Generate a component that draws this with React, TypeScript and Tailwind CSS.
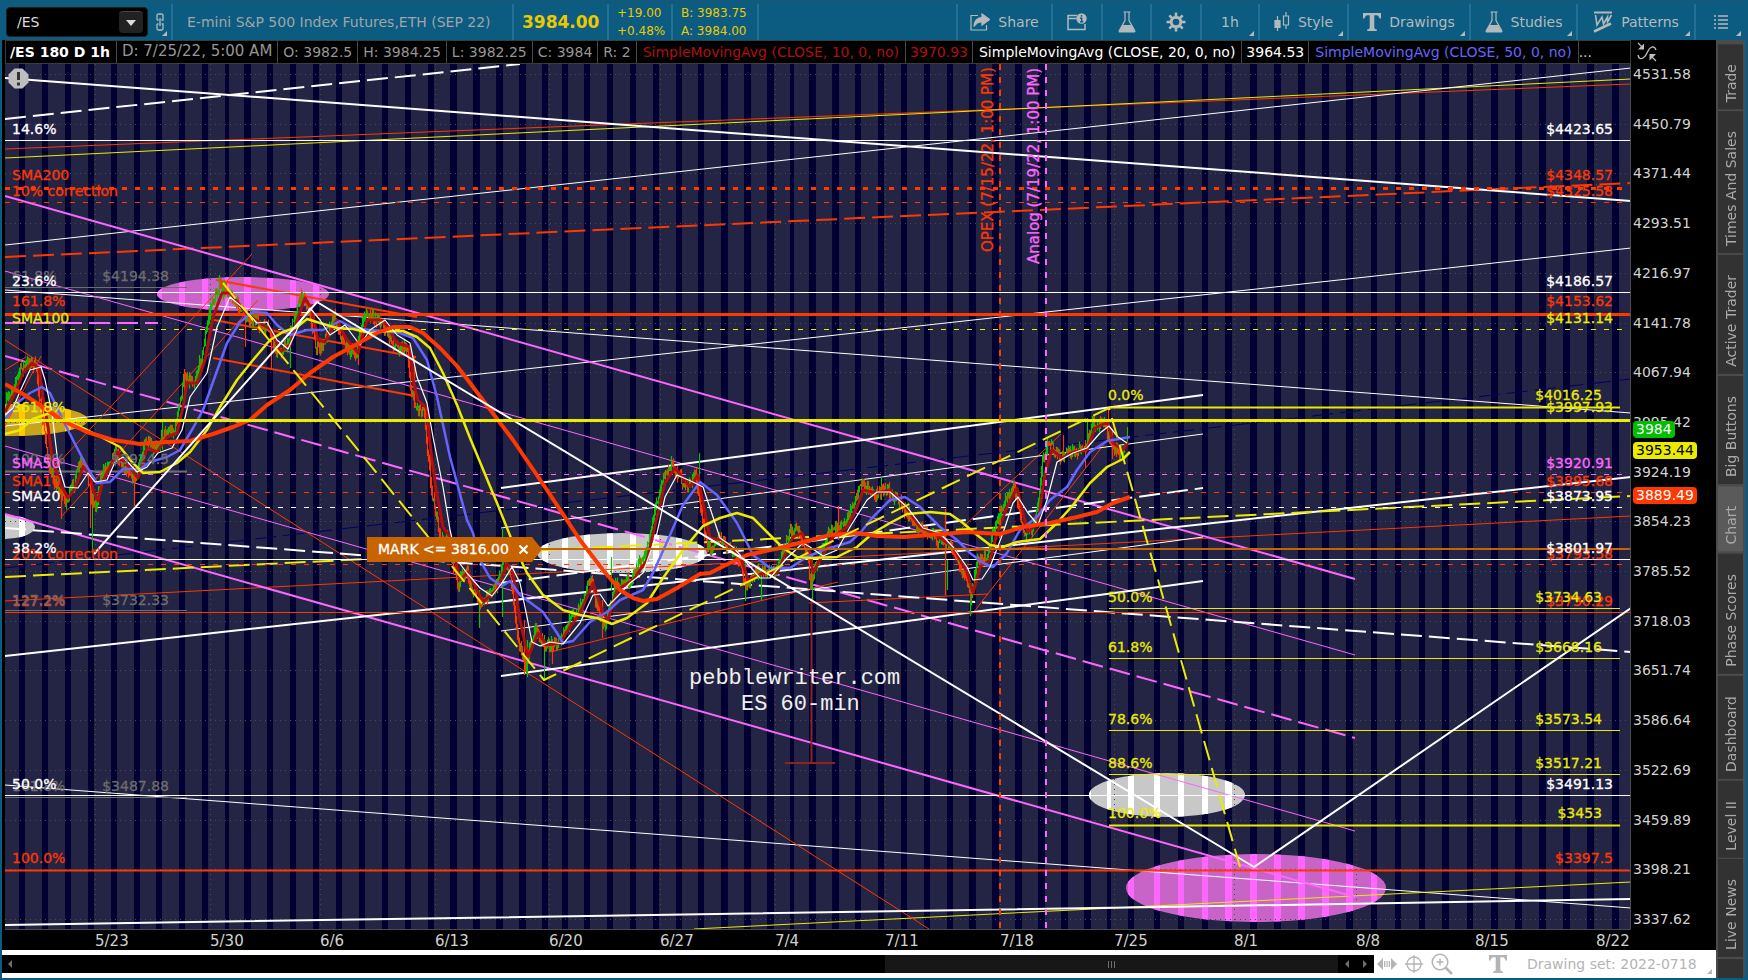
import type { ReactNode } from "react";

type Point = [number, number];

const RED = "#ff3700";
const YELLOW = "#ebeb00";
const PINK = "#ff66ff";
const WHITE = "#ffffff";
const GREY = "#6e6e6e";
const NAVY = "#000064";

const LONG_DASH = "21 7";
const SHORT_DASH = "5 8";

const LEFT = 5;
const RIGHT = 1631;
const TOP = 64;
const BOTTOM = 929;

// session breaks: [x, width]
const sessions: Point[] = [
  [19, 6], [42, 6], [65, 6], [88, 6], [111, 6], [134, 6], [156, 6], [179, 6], [202, 6], [225, 4],
  [244, 7], [267, 6], [290, 6], [313, 6], [336, 6], [359, 6], [382, 6], [405, 6], [428, 6], [450, 7],
  [473, 7], [496, 7], [519, 7], [542, 6], [562, 6], [584, 6], [607, 6], [630, 6], [653, 6], [676, 6],
  [698, 6], [721, 7], [744, 7], [767, 7], [790, 4], [809, 7], [832, 7], [855, 6], [878, 6], [901, 6],
  [924, 6], [947, 6], [969, 7], [992, 7], [1015, 7], [1038, 7], [1061, 7], [1084, 7], [1107, 4], [1128, 6],
  [1154, 6], [1178, 6], [1202, 6], [1225, 7], [1250, 7], [1274, 7], [1298, 7], [1322, 7], [1346, 7], [1371, 6],
  [1395, 6], [1419, 6], [1442, 7], [1467, 6], [1491, 7], [1515, 7], [1539, 7], [1563, 7], [1587, 7], [1612, 7],
];

const prices = [
  "4531.58", "4450.79", "4371.44", "4293.51", "4216.97", "4141.78", "4067.94", "3995.42", "3924.19",
  "3854.23", "3785.52", "3718.03", "3651.74", "3586.64", "3522.69", "3459.89", "3398.21", "3337.62",
];

const dates: [number, string][] = [
  [95, "5/23"], [210, "5/30"], [320, "6/6"], [435, "6/13"], [549, "6/20"], [660, "6/27"], [775, "7/4"],
  [885, "7/11"], [1000, "7/18"], [1114, "7/25"], [1234, "8/1"], [1356, "8/8"], [1475, "8/15"], [1596, "8/22"],
];

const ellipses = [
  { cx: 243, cy: 294, rx: 86, ry: 17, base: "#c864c8", lit: "#ff66ff" },
  { cx: 13, cy: 420, rx: 75, ry: 16, base: "#c8a41e", lit: "#ffc800" },
  { cx: 3, cy: 527, rx: 32, ry: 12, base: "#c8c8c8", lit: "#ffffff" },
  { cx: 622, cy: 553, rx: 85, ry: 20, base: "#c8c8c8", lit: "#ffffff" },
  { cx: 1167, cy: 795, rx: 78, ry: 22, base: "#c8c8c8", lit: "#ffffff" },
  { cx: 1256, cy: 888, rx: 130, ry: 34, base: "#c864c8", lit: "#ff66ff" },
];

// [points, color, width, dash]
type Line = [string, string, number, string?];

const lines: Line[] = [
  ["5,568 1631,379", NAVY, 1, LONG_DASH],
  ["5,149 600,125 1160,103 1631,84", RED, 1],
  ["5,158 600,129 1160,102 1631,79", YELLOW, 1],
  ["5,245 1631,68", WHITE, 1],
  ["5,257 1631,183", RED, 2, LONG_DASH],
  ["5,290 1631,413", WHITE, 1],
  ["5,426 1631,248", WHITE, 1],
  ["5,785 1631,908", WHITE, 1],
  ["694,929 1631,882", YELLOW, 1],
  ["5,601 1631,516", RED, 1],
  ["5,196 1355,579", PINK, 2],
  ["5,271 1355,655", PINK, 1],
  ["5,446 1355,831", PINK, 1],
  ["5,514 1355,897", PINK, 2],
  ["5,356 1355,738", PINK, 2, LONG_DASH],
  ["5,323 158,323", PINK, 2, LONG_DASH],
  ["5,340 929,929", RED, 1],
  ["55,467 252,254", RED, 1],
  ["62,516 258,300", RED, 1],
  ["5,370 26,357", RED, 1],
  ["5,426 41,356", RED, 1],
  ["216,280 417,317", RED, 2],
  ["214,320 416,357", RED, 2],
  ["213,358 415,396", RED, 2],
  ["550,652 838,582", RED, 1],
  ["809,603 988,594", RED, 1],
  ["962,528 1061,434", RED, 1],
  ["973,613 1109,438", RED, 1],
  ["501,488 1203,395", WHITE, 2],
  ["501,528 1203,434", WHITE, 1],
  ["501,583 1203,488", WHITE, 2, LONG_DASH],
  ["501,631 1203,537", WHITE, 1],
  ["501,676 1203,581", WHITE, 2],
  ["5,119 520,64", WHITE, 2, LONG_DASH],
  ["5,78 1631,201", WHITE, 2],
  ["5,656 1631,477", WHITE, 2],
  ["5,528 1631,652", WHITE, 2, LONG_DASH],
  ["5,577 1631,496", YELLOW, 2, LONG_DASH],
  ["5,925 1160,907 1631,899", WHITE, 2],
];

// [y, color, width, x1, x2, dash]
type Level = [number, string, number, number, number, string?];

const levels: Level[] = [
  [140.5, WHITE, 1, LEFT, RIGHT],
  [188.5, RED, 3, LEFT, RIGHT, SHORT_DASH],
  [202.5, RED, 1, LEFT, RIGHT, SHORT_DASH],
  [287.5, GREY, 1, LEFT, 187],
  [292.5, WHITE, 1, LEFT, RIGHT],
  [314.5, RED, 3, LEFT, RIGHT],
  [329.5, YELLOW, 1, LEFT, RIGHT, SHORT_DASH],
  [471.5, GREY, 2, LEFT, 187],
  [474.5, PINK, 1, LEFT, RIGHT, SHORT_DASH],
  [492.5, RED, 1, LEFT, RIGHT, SHORT_DASH],
  [507.5, WHITE, 1, LEFT, RIGHT, SHORT_DASH],
  [559.5, WHITE, 1, LEFT, RIGHT],
  [564.5, RED, 1, LEFT, RIGHT, SHORT_DASH],
  [610.5, GREY, 1, LEFT, 187],
  [612.5, RED, 1, LEFT, RIGHT],
  [795.5, WHITE, 1, LEFT, RIGHT],
  [797.5, GREY, 1, LEFT, 187],
  [870.5, RED, 2, LEFT, RIGHT],
  [407.5, YELLOW, 2, 1109, 1620],
  [608.5, YELLOW, 1, 1109, 1620],
  [658.5, YELLOW, 1, 1109, 1620],
  [730.5, YELLOW, 1, 1109, 1620],
  [774.5, YELLOW, 1, 1109, 1620],
  [825.5, YELLOW, 2, 1109, 1620],
];

// [x, baseline, text, color]
type Label = [number, number, string, string];

const startLabels: Label[] = [
  [12, 281, "61.8%", GREY],
  [12, 464, "100.0%", GREY],
  [12, 606, "127.2%", RED],
  [12, 605, "127.2%", GREY],
  [12, 791, "161.8%", GREY],
  [12, 559, "20% correction", RED],
  [12, 134, "14.6%", WHITE],
  [12, 180, "SMA200", RED],
  [12, 196, "10% correction", RED],
  [12, 286, "23.6%", WHITE],
  [12, 306, "161.8%", RED],
  [12, 323, "SMA100", YELLOW],
  [12, 412, "361.8%", YELLOW],
  [12, 468, "SMA50", PINK],
  [12, 486, "SMA10", RED],
  [12, 501, "SMA20", WHITE],
  [12, 553, "38.2%", WHITE],
  [12, 789, "50.0%", WHITE],
  [12, 863, "100.0%", RED],
  [1108, 400, "0.0%", YELLOW],
  [1108, 602, "50.0%", YELLOW],
  [1108, 652, "61.8%", YELLOW],
  [1108, 724, "78.6%", YELLOW],
  [1108, 768, "88.6%", YELLOW],
  [1108, 818, "100.0%", YELLOW],
];

const endLabels: Label[] = [
  [169, 281, "$4194.38", GREY],
  [169, 464, "$3924.5", GREY],
  [169, 605, "$3732.33", GREY],
  [169, 791, "$3487.88", GREY],
  [1613, 134, "$4423.65", WHITE],
  [1613, 180, "$4348.57", RED],
  [1613, 196, "$4325.58", RED],
  [1613, 286, "$4186.57", WHITE],
  [1613, 306, "$4153.62", RED],
  [1613, 323, "$4131.14", YELLOW],
  [1613, 412, "$3997.93", YELLOW],
  [1613, 468, "$3920.91", PINK],
  [1613, 486, "$3895.68", RED],
  [1613, 501, "$3873.95", WHITE],
  [1613, 559, "$3793.58", RED],
  [1613, 553, "$3801.97", WHITE],
  [1613, 606, "$3730.29", RED],
  [1613, 789, "$3491.13", WHITE],
  [1613, 863, "$3397.5", RED],
  [1602, 400, "$4016.25", YELLOW],
  [1602, 602, "$3734.63", YELLOW],
  [1602, 652, "$3668.16", YELLOW],
  [1602, 724, "$3573.54", YELLOW],
  [1602, 768, "$3517.21", YELLOW],
  [1602, 818, "$3453", YELLOW],
];

const sma200 =
  "5,384 23,394 43,407 63,421 87,432 113,440 140,444 167,442 190,441 213,434 233,427 250,420 267,405 290,390 310,373 333,357 357,344 377,333 393,327 410,327 423,333 440,348 457,366 470,383 513,440 547,490 580,540 603,570 620,590 633,598 643,601 657,599 677,588 700,574 710,573 730,563 747,555 780,548 807,541 830,535 857,533 877,536 903,537 930,535 967,532 1000,534 1023,527 1050,523 1077,517 1097,512 1113,503 1130,497";

const sma100 =
  "5,434 20,430 33,419 50,413 67,421 87,430 103,438 120,447 132,462 143,473 160,472 177,463 190,452 207,430 220,407 237,380 253,360 270,340 283,332 297,327 307,319 320,323 337,328 353,329 370,333 387,331 403,331 417,337 430,348 443,373 457,405 470,438 497,503 513,543 527,573 543,595 563,610 580,615 597,618 612,624 627,618 647,603 663,578 683,550 703,526 720,518 737,513 753,518 767,532 783,548 797,557 810,558 837,557 857,547 873,533 890,523 907,514 930,512 950,514 963,523 977,535 990,545 1003,547 1017,542 1040,539 1057,523 1073,505 1090,483 1107,467 1123,459 1130,452";

const sma50 =
  "5,420 17,403 30,393 42,387 50,393 58,410 73,440 87,467 97,483 110,482 123,469 140,469 150,462 167,457 180,450 193,428 203,410 213,382 227,343 240,322 253,312 267,313 277,325 290,335 307,330 323,330 340,321 353,328 370,330 383,331 400,333 413,338 427,360 437,397 450,457 467,520 473,533 480,560 490,578 502,586 510,581 520,595 543,612 557,633 563,643 573,641 590,622 607,612 620,600 643,590 653,573 667,542 683,505 700,482 717,495 737,523 753,555 770,568 790,568 807,557 823,550 850,542 860,533 873,517 890,500 905,497 920,507 940,527 957,540 970,553 983,563 993,567 1007,553 1020,530 1037,517 1050,500 1067,487 1077,470 1090,452 1107,441 1130,437";

const sma20 =
  "5,415 13,408 22,387 30,370 41,367 45,380 52,413 58,463 65,487 78,488 88,473 95,482 107,480 115,462 123,457 137,472 147,467 158,453 172,448 182,430 190,397 207,373 217,327 230,297 242,307 257,323 267,322 277,340 288,349 300,323 310,308 320,320 330,335 345,325 360,345 370,330 385,320 397,335 410,343 417,377 427,403 433,437 443,487 450,530 457,560 467,573 480,588 492,596 502,583 512,567 520,583 527,617 532,642 540,646 550,642 563,644 580,623 593,595 600,594 608,606 617,597 630,583 643,573 657,533 665,497 677,475 693,482 703,487 713,517 720,538 733,547 747,563 760,578 770,578 787,558 803,543 810,547 823,556 837,550 850,527 867,500 877,492 890,492 907,507 923,528 940,533 953,547 967,567 973,580 982,579 990,567 1003,533 1013,503 1018,497 1028,513 1038,525 1047,500 1057,462 1073,453 1087,448 1100,433 1109,426 1118,437 1127,443";

const sma10 =
  "5,412 15,393 23,373 32,363 39,368 43,397 48,427 52,457 60,483 68,498 75,488 83,467 90,473 93,490 98,501 102,483 110,467 117,452 125,463 132,470 138,478 147,448 157,452 167,437 177,433 183,407 187,383 197,383 205,360 213,317 222,293 230,293 238,303 248,315 263,325 272,330 280,352 290,345 297,320 305,298 312,310 318,340 325,342 337,320 345,337 358,353 367,320 383,320 397,343 410,347 413,380 418,400 427,408 430,443 435,483 443,527 450,537 460,580 468,572 483,602 497,590 507,563 513,573 520,620 528,657 538,633 547,645 560,643 570,627 580,613 593,583 603,613 608,620 617,590 633,580 647,560 657,517 665,483 675,468 690,487 698,475 703,503 710,538 723,540 740,555 748,580 763,573 777,573 793,537 802,533 810,553 813,573 820,560 833,537 847,527 857,507 863,490 877,493 890,490 903,503 920,527 933,533 943,540 953,547 967,572 973,593 980,567 990,560 997,533 1007,507 1017,488 1023,513 1028,532 1038,523 1045,473 1052,450 1062,458 1073,452 1087,450 1095,428 1108,422 1113,443 1123,450 1128,442";

// wide-range bars: [x, high, low, up]
const spikes: [number, number, number, boolean][] = [
  [223, 283, 300, true], [61, 490, 519, false], [90, 475, 528, false], [92, 500, 553, true],
  [134, 475, 506, false], [162, 422, 450, true], [184, 369, 400, false], [245, 310, 347, false],
  [271, 330, 369, false], [290, 330, 368, true], [358, 340, 365, false], [414, 357, 408, false],
  [430, 443, 488, false], [479, 590, 628, true], [502, 529, 617, true], [524, 620, 675, false],
  [527, 640, 677, true], [544, 635, 680, true], [552, 640, 664, false], [602, 600, 638, false],
  [611, 557, 590, true], [671, 456, 475, true], [699, 453, 480, true], [745, 560, 601, true],
  [761, 575, 600, true], [812, 555, 600, true], [838, 506, 540, false], [881, 477, 500, true],
  [945, 509, 595, false], [947, 560, 590, true], [970, 585, 616, true], [1063, 435, 460, false],
  [1087, 418, 450, true], [1085, 440, 468, false], [1108, 409, 430, false], [1112, 430, 459, false],
  [1127, 427, 442, true],
];

function toPoints(source: string): Point[] {
  return source.split(" ").map((pair) => pair.split(",").map(Number) as Point);
}

function valueAt(points: Point[], x: number) {
  for (let i = 1; i < points.length; i++) {
    const [x1, y1] = points[i - 1];
    const [x2, y2] = points[i];
    if (x <= x2) return y1 + ((y2 - y1) * (x - x1)) / (x2 - x1);
  }
  return points[points.length - 1][1];
}

function buildBars() {
  const fast = toPoints(sma10);
  const slow = toPoints(sma20);
  let seed = 7;
  const random = () => {
    seed = (seed * 16807) % 2147483647;
    return seed / 2147483647;
  };
  let up = "";
  let down = "";
  let last = valueAt(fast, 6);
  for (let x = LEFT + 1; x < 1126; x++) {
    const lead = valueAt(fast, x + 3);
    const price = lead + 0.35 * (lead - valueAt(slow, x + 3)) + (random() - 0.5) * 9;
    const high = Math.min(last, price) - random() * 6;
    const low = Math.max(last, price) + random() * 6;
    const bar = `M${x + 0.5} ${high.toFixed(1)}V${low.toFixed(1)}`;
    if (price < last) up += bar;
    else down += bar;
    last = price;
  }
  for (const [x, high, low, isUp] of spikes) {
    const bar = `M${x + 0.5} ${high}V${low}`;
    if (isUp) up += bar;
    else down += bar;
  }
  return { up, down };
}

const bars = buildBars();

function Chart() {
  return (
    <svg
      viewBox="5 64 1626 886"
      preserveAspectRatio="none"
      className="block h-full w-full font-['DejaVu_Sans',sans-serif] text-sm"
      role="img"
      aria-label="/ES hourly chart"
    >
      <defs>
        <clipPath id="plot">
          <rect x={LEFT} y={TOP} width={RIGHT - LEFT} height={BOTTOM - TOP} />
        </clipPath>
        <clipPath id="sessions">
          {sessions.map(([x, width]) => (
            <rect key={x} x={x} y={TOP} width={width} height={BOTTOM - TOP} />
          ))}
        </clipPath>
      </defs>
      <rect x={LEFT} y={TOP} width={1626} height={886} fill="#000" />
      <g clipPath="url(#plot)">
        <rect x={LEFT} y={TOP} width={1626} height={865} fill="#242444" />
        {sessions.map(([x, width]) => (
          <rect key={x} x={x} y={TOP} width={width} height={865} fill="#000032" />
        ))}
        {ellipses.map(({ cx, cy, rx, ry, base, lit }) => (
          <g key={cx}>
            <ellipse cx={cx} cy={cy} rx={rx} ry={ry} fill={base} />
            <ellipse cx={cx} cy={cy} rx={rx} ry={ry} fill={lit} clipPath="url(#sessions)" />
          </g>
        ))}
        <g stroke="#4b4b46" strokeDasharray="1 4">
          {prices.map((price, i) => (
            <line key={price} x1={LEFT} x2={RIGHT} y1={Math.round(74 + i * 49.7) + 0.5} y2={Math.round(74 + i * 49.7) + 0.5} />
          ))}
          {dates.map(([x, date]) => (
            <line key={date} x1={x + 0.5} x2={x + 0.5} y1={TOP} y2={BOTTOM} />
          ))}
        </g>

        {lines.map(([points, color, width, dash]) => (
          <polyline key={points} points={points} fill="none" stroke={color} strokeWidth={width} strokeDasharray={dash} />
        ))}
        {levels.map(([y, color, width, x1, x2, dash]) => (
          <line key={y} x1={x1} x2={x2} y1={y} y2={y} stroke={color} strokeWidth={width} strokeDasharray={dash} />
        ))}
        <line x1="811.5" x2="811.5" y1="598" y2="763" stroke="#8c2320" strokeWidth="2" />
        <line x1="785" x2="835" y1="763" y2="763" stroke="#8c2320" strokeWidth="2" />

        <path d={bars.up} stroke="#00c800" strokeWidth="1.2" />
        <path d={bars.down} stroke={RED} strokeWidth="1.2" />
        <g fill="none" strokeLinejoin="round">
          <polyline points={sma10} stroke="#af0f0f" strokeWidth="3" />
          <polyline points={sma50} stroke="#6464ff" strokeWidth="2.5" />
          <polyline points={sma100} stroke={YELLOW} strokeWidth="2.5" />
          <polyline points={sma20} stroke={WHITE} strokeWidth="1.2" />
          <polyline points={sma200} stroke={RED} strokeWidth="4" />
          <polyline points="94,554 317,302 1254,867 1631,608" stroke={WHITE} strokeWidth="2" />
          <polyline points="223,283 544,680 1109,408 1240,867" stroke={YELLOW} strokeWidth="2" strokeDasharray="20 8" />
        </g>
        <line x1={LEFT} x2={RIGHT} y1="420.5" y2="420.5" stroke={YELLOW} strokeWidth="3" />
        <line x1="540" x2={RIGHT} y1="549" y2="549" stroke="#c86400" strokeWidth="2" />
        <line x1="1000" x2="1000" y1={TOP} y2={BOTTOM} stroke={RED} strokeWidth="2" strokeDasharray="6 7" />
        <line x1="1046" x2="1046" y1={TOP} y2={BOTTOM} stroke={PINK} strokeWidth="2" strokeDasharray="6 7" />

        <g strokeWidth="0.3">
          {startLabels.map(([x, y, text, color]) => (
            <text key={`${y}${text}`} x={x} y={y} fill={color} stroke={color}>
              {text}
            </text>
          ))}
          {endLabels.map(([x, y, text, color]) => (
            <text key={text} x={x} y={y} fill={color} stroke={color} textAnchor="end">
              {text}
            </text>
          ))}
          <g className="text-[15px]">
            <text transform="translate(993 252) rotate(-90)" fill={RED} stroke={RED}>
              OPEX (7/15/22, 1:00 PM)
            </text>
            <text transform="translate(1039 264) rotate(-90)" fill={PINK} stroke={PINK}>
              Analog (7/19/22, 1:00 PM)
            </text>
          </g>
        </g>
        <g fill="#f0f0f0" className="font-['Liberation_Mono',monospace] text-[22px]">
          <text x="689" y="684">pebblewriter.com</text>
          <text x="741" y="710">ES 60-min</text>
        </g>

        <path d="M367 537H532L542 549.5L532 562H367Z" fill="#c86400" />
        <text x="378" y="554" fill="#fff" stroke="#fff" strokeWidth="0.3">MARK &lt;= 3816.00</text>
        <path d="M519.5 545.5l8 8m0-8l-8 8" stroke="#fff" strokeWidth="2.2" />

        <path d="M14.5 68.500h8l6 6v8l-6 6h-8l-6-6v-8z" fill="#bebebe" />
        <path d="M18.500 72v8m0 2.500v3" stroke="#333" strokeWidth="3" />
      </g>
      <path d="M5 929.5H1630.5V64" fill="none" stroke="#4b4b4b" />
      <g fill="#d2d2d2" className="text-[15px]">
        {dates.map(([x, date]) => (
          <text key={date} x={x} y="946">
            {date}
          </text>
        ))}
      </g>
    </svg>
  );
}

function Corner() {
  return (
    <svg viewBox="0 0 5 5" className="absolute right-1 bottom-1 h-[5px] w-[5px] fill-[#b4b9bc]" aria-hidden="true">
      <path d="M5 0V5H0Z" />
    </svg>
  );
}

function FlaskIcon() {
  return (
    <svg viewBox="0 0 18 22" className="h-[22px] w-[18px] shrink-0" fill="none" stroke="#b4b9bc" strokeWidth="1.2" aria-hidden="true">
      <path d="M5.500 1h7M7 1v8.500L1.300 19.500c-.4.900 0 1.500.8 1.500h13.800c.8 0 1.200-.6.800-1.500L11 9.500V1" />
      <path d="M4.800 14.500h8.400l3 6H1.800z" fill="#b4b9bc" />
    </svg>
  );
}

function BigT({ color }: { color: string }) {
  return (
    <svg viewBox="0 0 18 18" className="h-[18px] w-[18px] shrink-0" fill={color} aria-hidden="true">
      <path d="M0 0H18V5.500H16.500Q16 2.500 13.500 2.300H11.300V14.500Q11.300 16.500 13.800 16.600V18H4.200V16.600Q6.700 16.500 6.700 14.500V2.300H4.500Q2 2.500 1.500 5.500H0Z" />
    </svg>
  );
}

function ToolButton({
  label,
  width,
  corner = true,
  showLabel = true,
  children,
}: {
  label: string;
  width: string;
  corner?: boolean;
  showLabel?: boolean;
  children?: ReactNode;
}) {
  return (
    <button
      type="button"
      aria-label={label}
      className={`relative flex h-9 shrink-0 items-center justify-center gap-2 border-l-2 border-[#256f92] text-[#b4b9bc] ${width}`}
    >
      {children}
      {showLabel && <span>{label}</span>}
      {corner && <Corner />}
    </button>
  );
}

function Toolbar() {
  return (
    <header className="flex h-10 shrink-0 items-center border-t-4 border-[#0f5a7d] bg-[#0b5c80] text-sm">
      <div className="ml-1 flex h-[30px] w-[142px] shrink-0 items-center rounded-sm border border-[#1e1e1e] bg-black pr-1">
        <input aria-label="Symbol" defaultValue="/ES" className="w-0 flex-1 bg-transparent pl-2.5 text-[#dcdcdc] outline-none" />
        <button type="button" aria-label="Symbol list" className="flex h-[22px] w-6 items-center justify-center rounded-sm border-t border-[#444] bg-[#222]">
          <svg viewBox="0 0 10 6" className="h-1.5 w-2.5 fill-[#dcdcdc]" aria-hidden="true">
            <path d="M0 0H10L5 6Z" />
          </svg>
        </button>
      </div>
      <button type="button" aria-label="Link" className="relative flex h-9 w-[23px] shrink-0 items-center justify-center">
        <svg viewBox="0 0 8 18" className="h-[18px] w-2" fill="none" stroke="#b4b9bc" strokeWidth="1.300" aria-hidden="true">
          <path d="M1 7V2.500Q1 1 2.500 1H5.500Q7 1 7 2.500V7H5.500M1 11V15.500Q1 17 2.500 17H5.500Q7 17 7 15.500V11H5.500M2.500 7H1M2.500 11H1M4 5V13" />
        </svg>
        <Corner />
      </button>
      <div className="flex h-9 w-[341px] shrink-0 items-center border-l-2 border-[#256f92] pl-3.5 whitespace-nowrap text-[#a0a5a8]">
        E-mini S&amp;P 500 Index Futures,ETH (SEP 22)
      </div>
      <div className="flex h-9 w-[95px] shrink-0 items-center border-l-2 border-[#256f92] pl-2 text-[17px] font-bold text-[#ebc800]">
        3984.00
      </div>
      <div className="flex h-9 w-16 shrink-0 flex-col justify-center border-l-2 border-[#256f92] pl-2 text-xs/[18px] text-[#ebc800]">
        <span>+19.00</span>
        <span>+0.48%</span>
      </div>
      <div className="flex h-9 w-[86px] shrink-0 flex-col justify-center border-l-2 border-[#256f92] pl-2 text-xs/[18px] whitespace-nowrap text-[#ebc800]">
        <span>B: 3983.75</span>
        <span>A: 3984.00</span>
      </div>
      <div className="h-9 flex-1 border-l-2 border-[#256f92]" />
      <ToolButton label="Share" width="w-[95px]" corner={false}>
        <svg viewBox="0 0 20 18" className="h-[18px] w-5 shrink-0" fill="none" stroke="#b4b9bc" strokeWidth="1.200" aria-hidden="true">
          <path d="M8 2.500H1V17H16.500V12" />
          <path d="M12 1L19.500 6.500L12 12V8.800Q7 8.500 4 13.500Q4.500 5 12 4.300Z" fill="#b4b9bc" />
        </svg>
      </ToolButton>
      <ToolButton label="Company info" width="w-[50px]" corner={false} showLabel={false}>
        <svg viewBox="0 0 20 18" className="h-[18px] w-5" aria-hidden="true">
          <path d="M10 2.500H1V16.500H18V11M1 5.500H9.500" fill="none" stroke="#b4b9bc" strokeWidth="1.500" />
          <circle cx="14.500" cy="5.500" r="5.200" fill="#b4b9bc" />
          <path d="M14.500 2v1.800M13 5.300h1.700v3.500M13 8.800h3.300" fill="none" stroke="#0b5c80" strokeWidth="1.400" />
        </svg>
      </ToolButton>
      <ToolButton label="Quick study" width="w-[49px]" corner={false} showLabel={false}>
        <FlaskIcon />
      </ToolButton>
      <ToolButton label="Settings" width="w-[50px]" corner={false} showLabel={false}>
        <svg viewBox="0 0 20 20" className="h-5 w-5" fill="none" stroke="#b4b9bc" aria-hidden="true">
          <circle cx="10" cy="10" r="4.800" strokeWidth="3" />
          <path
            d="M10 .5v4M10 15.500v4M.5 10h4M15.500 10h4M3.300 3.300l2.800 2.800M13.900 13.900l2.800 2.800M16.700 3.300l-2.800 2.800M6.100 13.900l-2.800 2.800"
            strokeWidth="2.600"
          />
        </svg>
      </ToolButton>
      <ToolButton label="1h" width="w-[58px]" />
      <ToolButton label="Style" width="w-[89px]">
        <svg viewBox="0 0 16 20" className="h-5 w-4 shrink-0" fill="none" stroke="#b4b9bc" strokeWidth="1.200" aria-hidden="true">
          <path d="M3.500 4v15M12 0v4M12 13v4" />
          <path d="M1 8.500h5v7H1z" fill="#b4b9bc" />
          <path d="M9.500 4h5v9h-5z" />
        </svg>
      </ToolButton>
      <ToolButton label="Drawings" width="w-[122px]">
        <BigT color="#b4b9bc" />
      </ToolButton>
      <ToolButton label="Studies" width="w-[107px]">
        <FlaskIcon />
      </ToolButton>
      <ToolButton label="Patterns" width="w-[118px]">
        <svg viewBox="0 0 20 22" className="h-[22px] w-5 shrink-0" fill="none" stroke="#b4b9bc" strokeWidth="1.600" aria-hidden="true">
          <path d="M1 1.500H19" strokeWidth="2" />
          <path d="M2.500 4L4 14L9 6L10.500 13L14.500 6L14.500 11L18.500 4" />
          <path d="M1 20.500L18 12.500" strokeWidth="2.600" />
        </svg>
      </ToolButton>
      <ToolButton label="Chart menu" width="w-[51px]" showLabel={false}>
        <svg viewBox="0 0 14 14" className="h-3.5 w-3.5" stroke="#b4b9bc" strokeWidth="1.300" aria-hidden="true">
          <path d="M0 1h2M4 1h10M0 5h2M4 5h10M0 9h2M4 9h10M0 13h2M4 13h10" />
        </svg>
      </ToolButton>
    </header>
  );
}

const studyCells = [
  { text: "D: 7/25/22, 5:00 AM", className: "px-[5px] text-[15px] text-[#969696]" },
  { text: "O: 3982.5", className: "px-[5px] text-[#969696]" },
  { text: "H: 3984.25", className: "px-[5px] text-[#969696]" },
  { text: "L: 3982.25", className: "px-[5px] text-[#969696]" },
  { text: "C: 3984", className: "px-[5px] text-[#969696]" },
  { text: "R: 2", className: "px-[5px] text-[#969696]" },
  { text: "SimpleMovingAvg (CLOSE, 10, 0, no)", className: "px-1.5 text-[#af0f0f]" },
  { text: "3970.93", className: "px-1 text-[#af0f0f]" },
  { text: "SimpleMovingAvg (CLOSE, 20, 0, no)", className: "px-1.5 text-white" },
  { text: "3964.53", className: "px-1 text-white" },
  { text: "SimpleMovingAvg (CLOSE, 50, 0, no)", className: "px-1.5 text-[#6464ff]" },
];

function StudyBar() {
  return (
    <div className="flex h-6 shrink-0 items-center overflow-hidden border border-[#3c3c3c] bg-black text-sm whitespace-nowrap">
      <span className="flex h-full items-center pr-1.5 pl-1 font-bold text-white">/ES 180 D 1h</span>
      {studyCells.map(({ text, className }) => (
        <span key={text} className={`flex h-full items-center border-l border-[#464646] ${className}`}>
          {text}
        </span>
      ))}
      <span className="flex h-full items-center border-l border-[#464646] text-[#c8c8c8]">...</span>
    </div>
  );
}

function PriceAxis() {
  return (
    <div className="relative flex w-[85px] shrink-0 flex-col bg-black text-sm text-[#d2d2d2]">
      <button type="button" aria-label="Fit axis" className="flex h-6 items-center pl-1.5">
        <svg viewBox="0 0 20 20" className="h-5 w-5" fill="none" stroke="#bebebe" strokeWidth="1.300" aria-hidden="true">
          <path d="M1 13Q2 18 6 16Q9 14 10.500 10Q12 6 15 5Q18 4.500 19 8" />
          <path d="M1 1L6 6M19 19L14 14" />
          <path d="M7 1.500V7.500H1Z M12.500 12H19L12.500 18.500Z" fill="#bebebe" stroke="none" />
        </svg>
      </button>
      <ol className="flex flex-1 flex-col justify-between pb-[21px] pl-0.5 leading-5">
        {prices.map((price) => (
          <li key={price}>{price}</li>
        ))}
      </ol>
      <span className="absolute top-[381px] left-0.5 rounded-sm bg-[#00be00] px-[3px] leading-[17px] text-white">3984</span>
      <span className="absolute top-[402px] left-0.5 rounded-sm bg-[#ebeb00] px-[3px] leading-[17px] text-black">3953.44</span>
      <span className="absolute top-[447px] left-0.5 rounded-sm bg-[#ff3700] px-[3px] leading-[17px] text-white">3889.49</span>
    </div>
  );
}

function ScrollBar() {
  return (
    <div className="flex h-7 shrink-0 items-center bg-white">
      <div className="flex h-[18px] min-w-0 flex-1 items-center bg-black">
        <button type="button" aria-label="Scroll left" className="h-full w-4 shrink-0 pl-1.5 text-[#6e6e6e]">
          <svg viewBox="0 0 4 8" className="h-2 w-1 fill-current" aria-hidden="true">
            <path d="M4 0V8L0 4Z" />
          </svg>
        </button>
        <div className="flex h-full min-w-0 flex-1">
          <div className="w-[65.7%] bg-black" />
          <div className="flex flex-1 items-center justify-center gap-0.5 bg-[#171717]">
            <i className="h-[7px] w-px bg-[#6e6e6e]" />
            <i className="h-[7px] w-px bg-[#6e6e6e]" />
            <i className="h-[7px] w-px bg-[#6e6e6e]" />
          </div>
        </div>
        <button type="button" aria-label="Step left" className="flex h-full w-[18px] shrink-0 items-center justify-center text-[#6e6e6e]">
          <svg viewBox="0 0 4 8" className="h-2 w-1 fill-current" aria-hidden="true">
            <path d="M4 0V8L0 4Z" />
          </svg>
        </button>
        <button type="button" aria-label="Step right" className="flex h-full w-[18px] shrink-0 items-center justify-center text-[#6e6e6e]">
          <svg viewBox="0 0 4 8" className="h-2 w-1 fill-current" aria-hidden="true">
            <path d="M0 0V8L4 4Z" />
          </svg>
        </button>
      </div>
      <div className="relative flex h-full w-[342px] shrink-0 items-center pl-[3px] text-sm text-[#b4b4b4]">
        <button type="button" aria-label="Pan">
          <svg viewBox="0 0 20 12" className="h-3 w-5" fill="#b4b4b4" aria-hidden="true">
            <path d="M6 0V12L0 6ZM14 0V12L20 6ZM7 3h1.300v6H7zM9.400 3h1.200v6H9.400zM11.700 3h1.300v6h-1.300z" />
          </svg>
        </button>
        <button type="button" aria-label="Crosshair" className="ml-2">
          <svg viewBox="0 0 18 18" className="h-[18px] w-[18px]" fill="none" stroke="#b4b4b4" strokeWidth="1.300" aria-hidden="true">
            <circle cx="9" cy="9" r="7" />
            <path d="M9 0V18M0 9H18" />
          </svg>
        </button>
        <button type="button" aria-label="Zoom in" className="ml-2">
          <svg viewBox="0 0 22 22" className="h-[22px] w-[22px]" fill="none" stroke="#b4b4b4" strokeWidth="1.500" aria-hidden="true">
            <circle cx="9" cy="9" r="7.800" />
            <path d="M5.500 9h7M9 5.500v7" />
            <path d="M14.500 14.500L21 21" strokeWidth="2.500" />
          </svg>
        </button>
        <button type="button" aria-label="Text tool" className="ml-9">
          <BigT color="#b4b4b4" />
        </button>
        <button type="button" className="ml-5 whitespace-nowrap">Drawing set: 2022-0718</button>
        <Corner />
      </div>
    </div>
  );
}

const tabs = [
  "Trade",
  "Times And Sales",
  "Active Trader",
  "Big Buttons",
  "Chart",
  "Phase Scores",
  "Dashboard",
  "Level II",
  "Live News",
];

function SideTabs() {
  return (
    <nav className="flex w-[29px] shrink-0 flex-col gap-0.5 overflow-hidden bg-[#4b4b4b] px-0.5 pt-1 text-sm text-[#aaaaaa]">
      {tabs.map((tab) => (
        <button
          key={tab}
          type="button"
          className={`flex rotate-180 items-center justify-center pt-[7px] pb-5 whitespace-nowrap [writing-mode:vertical-rl] ${
            tab === "Chart" ? "bg-[#5a5a5a]" : "bg-[#323232]"
          }`}
        >
          {tab}
        </button>
      ))}
      <div className="flex-1 bg-[#323232]" />
    </nav>
  );
}

export default function App() {
  return (
    <div className="flex h-screen flex-col border-r-[3px] border-b-2 border-l-2 border-[#0b5c80] bg-black font-['DejaVu_Sans',sans-serif]">
      <Toolbar />
      <div className="flex min-h-0 flex-1">
        <div className="flex min-w-0 flex-1 flex-col">
          <div className="flex min-h-0 flex-1">
            <main className="flex min-w-0 flex-1 flex-col pl-[3px]">
              <StudyBar />
              <div className="min-h-0 flex-1">
                <Chart />
              </div>
            </main>
            <PriceAxis />
          </div>
          <ScrollBar />
        </div>
        <SideTabs />
      </div>
    </div>
  );
}
